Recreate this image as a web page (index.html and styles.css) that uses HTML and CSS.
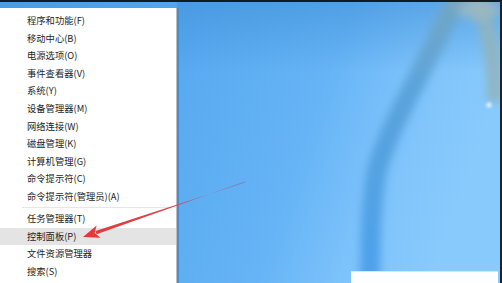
FILE: index.html
```html
<!DOCTYPE html>
<html lang="zh-CN">
<head>
<meta charset="utf-8">
<title>Win+X</title>
<link rel="stylesheet" href="styles.css">
</head>
<body>
<div class="screen">
  <ul class="menu">
    <li class="item">程序和功能(F)</li>
    <li class="item">移动中心(B)</li>
    <li class="item">电源选项(O)</li>
    <li class="item">事件查看器(V)</li>
    <li class="item">系统(Y)</li>
    <li class="item">设备管理器(M)</li>
    <li class="item">网络连接(W)</li>
    <li class="item">磁盘管理(K)</li>
    <li class="item">计算机管理(G)</li>
    <li class="item">命令提示符(C)</li>
    <li class="item">命令提示符(管理员)(A)</li>
    <li class="sep"></li>
    <li class="item">任务管理器(T)</li>
    <li class="item active">控制面板(P)</li>
    <li class="item">文件资源管理器</li>
    <li class="item">搜索(S)</li>
  </ul>
  <div class="wall">
    <svg class="wall-art" viewBox="0 0 323 281" preserveAspectRatio="none">
      <defs>
        <linearGradient id="bg" x1="0" y1="0" x2="1" y2="0.3">
          <stop offset="0" stop-color="#56a8ef"/>
          <stop offset="0.5" stop-color="#66b4f6"/>
          <stop offset="0.75" stop-color="#7ec3fb"/>
          <stop offset="1" stop-color="#88cafc"/>
        </linearGradient>
        <linearGradient id="top" x1="0" y1="0" x2="0" y2="1">
          <stop offset="0" stop-color="#3f8fd6" stop-opacity="0.55"/>
          <stop offset="0.25" stop-color="#3f8fd6" stop-opacity="0"/>
        </linearGradient>
        <linearGradient id="strokeGrad" x1="0" y1="0" x2="0" y2="281" gradientUnits="userSpaceOnUse">
          <stop offset="0" stop-color="#7aa6b8"/>
          <stop offset="0.3" stop-color="#4f98cf"/>
          <stop offset="1" stop-color="#3a95e6"/>
        </linearGradient>
        <filter id="blur" x="-50%" y="-50%" width="200%" height="200%">
          <feGaussianBlur stdDeviation="4"/>
        </filter>
        <filter id="blur2" x="-50%" y="-50%" width="200%" height="200%">
          <feGaussianBlur stdDeviation="1.5"/>
        </filter>
      </defs>
      <rect width="323" height="281" fill="url(#bg)"/>
      <rect width="323" height="281" fill="url(#top)"/>
      <path d="M 282 -10 C 252 60, 214 118, 200 168 C 194 200, 193 240, 193 295" fill="none" stroke="url(#strokeGrad)" stroke-width="20" stroke-opacity="0.75" filter="url(#blur)"/>
      <path d="M 296 -10 C 312 20, 318 55, 318 100" fill="none" stroke="#90b4bf" stroke-width="16" stroke-opacity="0.9" filter="url(#blur)"/>
      <ellipse cx="302" cy="8" rx="22" ry="10" fill="#9db9be" fill-opacity="0.8" filter="url(#blur)"/>
      <circle cx="312" cy="103" r="2.5" fill="#e6f4ff" filter="url(#blur2)"/>
    </svg>
    <div class="wall-content">
      <div class="window-edge"></div>
    </div>
  </div>
  <svg class="arrow" viewBox="0 0 502 283" width="502" height="283">
    <defs>
      <linearGradient id="shaft" x1="96" y1="233" x2="245" y2="182" gradientUnits="userSpaceOnUse">
        <stop offset="0" stop-color="#e23c3c"/>
        <stop offset="0.7" stop-color="#d9434b"/>
        <stop offset="1" stop-color="#9a5a9a" stop-opacity="0.6"/>
      </linearGradient>
    </defs>
    <polygon points="96.5,234.2 95.5,230.9 245.2,182.4 244.8,181.6" fill="url(#shaft)"/>
    <polygon points="83,237 100.5,237.8 94.6,233 96.6,225.6" fill="#e23a3a"/>
  </svg>
</div>
</body>
</html>
```

FILE: styles.css
```css
html, body {
  margin: 0;
  padding: 0;
  background: #10151c;
}

.screen {
  position: relative;
  width: 502px;
  height: 283px;
  box-sizing: border-box;
  border-top: 2px solid #141a22;
  border-right: 2px solid #1c232c;
  background: linear-gradient(90deg, #4c9ce2 0%, #55a6ec 40%, #5eaef2 100%);
  display: flex;
  align-items: stretch;
  overflow: hidden;
}

.menu {
  list-style: none;
  margin: 6px 0 0 0;
  padding: 4px 0 0 0;
  width: 176px;
  flex: 0 0 176px;
  background: #ffffff;
  border-right: 1px solid #b8bec4;
  box-shadow: 2px 0 0 #4a8ccc;
  position: relative;
  z-index: 1;
  font-family: "Noto Sans CJK SC", "Noto Sans", sans-serif;
  font-size: 9.3px;
  color: #1e1e1e;
}

.item {
  height: 17.6px;
  line-height: 17.6px;
  padding-left: 27px;
  white-space: nowrap;
}

.item.active {
  background: #e4e4e4;
}

.sep {
  height: 4.6px;
  display: flex;
  align-items: center;
  padding: 0 6px 0 22px;
}

.sep::before {
  content: "";
  flex: 1;
  height: 1px;
  background: #e6e6e6;
}

.wall {
  flex: 1;
  display: grid;
  min-width: 0;
}

.wall-art {
  grid-area: 1 / 1;
  width: 100%;
  height: 100%;
  display: block;
}

.wall-content {
  grid-area: 1 / 1;
  display: flex;
  flex-direction: column;
  justify-content: flex-end;
  align-items: flex-end;
  padding-right: 2px;
}

.window-edge {
  width: 147px;
  height: 11px;
  background: #fdfeff;
  border-top: 1px solid #d8e6f2;
}

.arrow {
  position: absolute;
  left: 0;
  top: -2px;
  pointer-events: none;
  z-index: 2;
}
```
